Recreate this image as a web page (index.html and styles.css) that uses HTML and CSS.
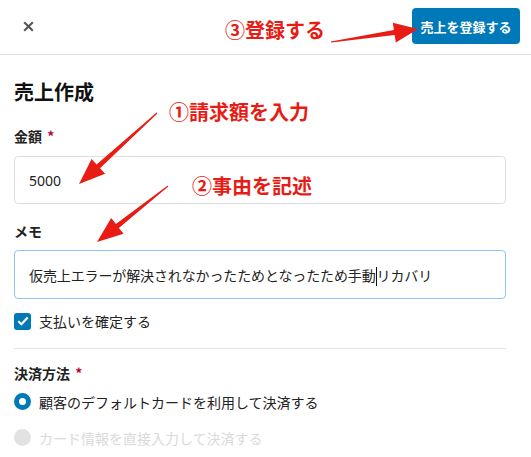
FILE: index.html
```html
<!DOCTYPE html>
<html lang="ja">
<head>
<meta charset="utf-8">
<link rel="stylesheet" href="styles.css">
</head>
<body>
<div class="page">
  <header class="header">
    <button class="close" aria-label="閉じる">
      <svg width="11" height="11" viewBox="0 0 11 11"><path d="M1.2 1.2 L9.8 9.8 M9.8 1.2 L1.2 9.8" stroke="#555" stroke-width="2.1" fill="none"/></svg>
    </button>
    <button class="submit">売上を登録する</button>
  </header>
  <main class="main">
    <h1 class="title">売上作成</h1>
    <div class="field amount">
      <div class="label">金額 <span class="req">*</span></div>
      <div class="input">5000</div>
    </div>
    <div class="field memo">
      <div class="label">メモ</div>
      <div class="input focus">仮売上エラーが解決されなかったためとなったため手動<span class="caret"></span>リカバリ</div>
    </div>
    <div class="check-row">
      <span class="checkbox">
        <svg width="12" height="10" viewBox="0 0 12 10"><path d="M1.3 5.2 L4.4 8.2 L10.7 1.6" stroke="#fff" stroke-width="2.2" fill="none"/></svg>
      </span>
      <span class="opt-text">支払いを確定する</span>
    </div>
    <hr class="divider">
    <div class="label">決済方法 <span class="req">*</span></div>
    <div class="radios">
      <div class="radio-row">
        <span class="radio on"></span>
        <span class="opt-text">顧客のデフォルトカードを利用して決済する</span>
      </div>
      <div class="radio-row disabled">
        <span class="radio off"></span>
        <span class="opt-text">カード情報を直接入力して決済する</span>
      </div>
    </div>
  </main>

  <div class="note n3">③登録する</div>
  <div class="note n1">①請求額を入力</div>
  <div class="note n2">②事由を記述</div>
  <svg class="arrows" width="531" height="457" viewBox="0 0 531 457">
    <polygon fill="#e81c14" points="156.6,112.6 96.6,164.5 91.6,159 79,184 105.1,173.8 100,168.3 157.4,113.4"/>
    <polygon fill="#e81c14" points="167.7,185.6 115.9,223.9 111.2,218 97,242 123.6,233.8 118.9,227.9 168.3,186.4"/>
    <polygon fill="#e81c14" points="330.9,41.4 393.9,30.1 392.8,22.7 418,29 395.8,42.5 394.7,35.1 331.1,42.6"/>
  </svg>
</div>
</body>
</html>
```

FILE: styles.css
```css
* { box-sizing: border-box; }
html, body { margin: 0; padding: 0; background: #fff; }
body {
  font-family: "Noto Sans", "Noto Sans CJK JP", sans-serif;
  color: #222;
}
.page { position: relative; width: 531px; height: 457px; overflow: hidden; }

.header {
  height: 55px;
  border-bottom: 1px solid #e2e2e2;
  display: flex;
  align-items: center;
  justify-content: space-between;
  padding: 0 11px 0 23px;
}
.close {
  border: 0; background: none; padding: 0;
  width: 11px; height: 11px;
  display: flex; margin-top: -2px;
}
.submit {
  width: 108px; height: 36px;
  margin-top: -2px;
  border: 0; border-radius: 4px;
  background: #0079b8;
  color: #fff;
  font-family: "Noto Sans CJK JP", sans-serif;
  font-weight: 700;
  font-size: 13px;
  padding: 0;
}

.main { padding: 23px 25px 0 14px; }
.title {
  margin: 0 0 20px;
  font-family: "Noto Sans CJK JP", sans-serif;
  font-size: 20px; line-height: 28px; font-weight: 700;
  color: #111;
}
.label {
  font-family: "Noto Sans CJK JP", sans-serif;
  font-size: 14px; line-height: 20px; font-weight: 700;
  color: #222;
}
.req { color: #c4003a; margin-left: 2px; }
.amount { margin-bottom: 17px; }
.amount .label { margin-bottom: 10px; }
.memo { margin-bottom: 13px; }
.memo .label { margin-bottom: 9px; }
.input {
  height: 48px;
  border: 1px solid #dedede;
  border-radius: 4px;
  padding: 0 14px;
  display: flex; align-items: center;
  font-family: "Noto Sans", "Noto Sans CJK JP", sans-serif;
  font-size: 14px; color: #222;
}
.input.focus { height: 49px; border-color: #8ec5f5; letter-spacing: -0.12px; }
.caret { display: inline-block; width: 1px; height: 19px; background: #111; margin: 0 0 -3px; }

.check-row { display: flex; align-items: center; gap: 8px; height: 18px; }
.checkbox {
  width: 17px; height: 17px; border-radius: 3px;
  background: #0079b8;
  display: flex; align-items: center; justify-content: center;
}
.opt-text {
  font-family: "Noto Sans CJK JP", sans-serif;
  font-size: 14px; color: #222;
}
.divider { border: 0; border-top: 1px solid #e4e4e4; margin: 18px 0 14px; }

.radios { margin-top: 10px; display: flex; flex-direction: column; gap: 19px; }
.radio-row { display: flex; align-items: center; gap: 8px; height: 17px; }
.radio { width: 17px; height: 17px; border-radius: 50%; }
.radio.on { border: 5px solid #0079b8; background: #fff; }
.radio.off { background: #e2e2e2; }
.disabled .opt-text { color: #dadada; }

.note {
  position: absolute;
  font-family: "Noto Sans CJK JP", sans-serif;
  font-weight: 700; font-size: 20px; line-height: 26px;
  color: #e81c14;
  white-space: nowrap;
}
.n3 { left: 225px; top: 17px; }
.n1 { left: 169px; top: 99px; }
.n2 { left: 192px; top: 173px; }
.arrows { position: absolute; left: 0; top: 0; pointer-events: none; }
```
